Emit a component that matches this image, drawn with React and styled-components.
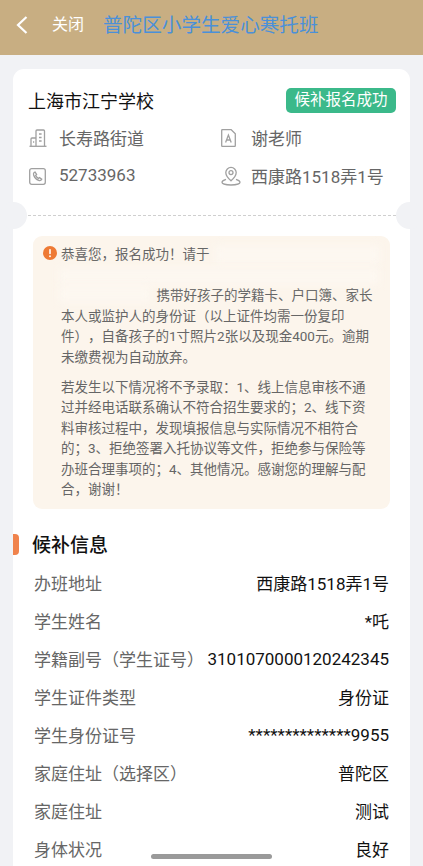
import React from 'react';
import styled, { createGlobalStyle } from 'styled-components';

const GlobalStyle = createGlobalStyle`
  html, body {
    margin: 0;
    padding: 0;
    height: 866px;
    overflow: hidden;
    background: #f1f2f5;
    font-family: Roboto, "Noto Sans CJK SC", sans-serif;
    text-spacing-trim: space-all;
  }
`;

const Page = styled.div`
  position: relative;
  width: 423px;
  height: 866px;
  overflow: hidden;
`;

const Header = styled.header`
  height: 55px;
  background: #c8ae82;
  display: flex;
  align-items: center;
  padding: 0 0 9px 16px;
  box-sizing: border-box;
`;

const BackButton = styled.span`
  display: flex;
  width: 14px;
  margin-right: 22px;
  padding-top: 4px;
`;

const CloseText = styled.span`
  font-size: 16px;
  color: #fff;
  margin-right: 19px;
`;

const HeaderTitle = styled.h1`
  margin: 0;
  font-size: 19.6px;
  font-weight: 400;
  color: #4a90d9;
`;

const Card = styled.main`
  position: relative;
  margin: 14px 13px 0;
  background: #fff;
  border-radius: 11px 11px 0 0;
  padding-top: 19px;
`;

const SchoolRow = styled.div`
  display: flex;
  justify-content: space-between;
  align-items: center;
  padding: 0 14px 0 15px;
  height: 25px;
`;

const SchoolName = styled.h2`
  margin: 0 0 2px;
  font-size: 18px;
  font-weight: 400;
  color: #111;
`;

const Badge = styled.span`
  width: 110px;
  height: 25px;
  line-height: 25px;
  text-align: center;
  border-radius: 5px;
  background: #3bb98a;
  color: #fff;
  font-size: 15.5px;
`;

const InfoGrid = styled.div`
  display: grid;
  grid-template-columns: 192px 1fr;
  grid-auto-rows: 38px;
  padding: 6px 0 0 16px;
  height: 102px;
  box-sizing: border-box;
`;

const InfoItem = styled.div`
  display: flex;
  align-items: center;
  color: #666;
  font-size: 17px;
`;

const InfoIcon = styled.span`
  display: flex;
  width: ${(p) => p.$w}px;
  margin-right: ${(p) => p.$gap}px;
`;

const InfoText = styled.span`
  margin-bottom: 2px;
`;

const Divider = styled.div`
  position: relative;
  height: 0;
  margin: 0 14px 0 15px;
  border-top: 1px dashed #cfcfcf;
`;

const Notch = styled.span`
  position: absolute;
  top: -14px;
  ${(p) => (p.$side === 'left' ? 'left: -28px;' : 'right: -27px;')}
  width: 27px;
  height: 27px;
  border-radius: 50%;
  background: #f1f2f5;
`;

const Notice = styled.section`
  position: relative;
  margin: 20px 20px 0;
  padding: 8px 14px 9px 28px;
  background: #fcf5ec;
  border-radius: 9px;
  font-size: 13.5px;
  line-height: 20.5px;
  color: #666;
`;

const NoticeIcon = styled.span`
  position: absolute;
  left: 10px;
  top: 10px;
  display: flex;
`;

const NoticePara = styled.p`
  margin: 0 0 9.5px;
  &:last-child {
    margin-bottom: 0;
  }
`;

const Indent = styled.span`
  display: inline-block;
  width: 95.5px;
`;

// the blurred-out part of the message
const Smudge = styled.span`
  position: absolute;
  left: ${(p) => p.$left}px;
  top: ${(p) => p.$top}px;
  width: ${(p) => p.$width}px;
  height: ${(p) => p.$height}px;
  background: #fdf8f1;
  filter: blur(4px);
`;

const SectionHead = styled.div`
  display: flex;
  align-items: center;
  margin-top: 25px;
  height: 21px;
`;

const SectionMark = styled.span`
  width: 6px;
  height: 21px;
  border-radius: 0 4px 4px 0;
  background: #f0834c;
  margin-right: 13px;
`;

const SectionTitle = styled.h3`
  margin: 0 0 1px;
  font-size: 19px;
  font-weight: 500;
  color: #111;
`;

const Rows = styled.div`
  margin-top: 9px;
  padding: 0 21px;
`;

const Row = styled.div`
  display: flex;
  justify-content: space-between;
  align-items: center;
  height: 38px;
  font-size: 17px;
`;

const RowLabel = styled.span`
  color: #666;
`;

const RowValue = styled.span`
  color: #111;
`;

const HomeBar = styled.div`
  position: absolute;
  left: 151px;
  bottom: 7px;
  width: 121px;
  height: 5px;
  border-radius: 3px;
  background: #9a9a9a;
`;

const stroke = { fill: 'none', stroke: '#a0a0a0', strokeWidth: 1.3 };

const BuildingIcon = () => (
  <svg width="18" height="18" viewBox="0 0 18 18" {...stroke}>
    <path d="M0.5 17.3H17.5" />
    <path d="M7 17V2a1 1 0 0 1 1-1h6.5a1 1 0 0 1 1 1V17" />
    <path d="M7 9H3a1 1 0 0 0-1 1v7" />
    <path d="M10 5H12.6M10 8.5H12.6M10 12H12.6M4 13H5.2" />
  </svg>
);

const ContactIcon = () => (
  <svg width="15" height="18" viewBox="0 0 15 18" {...stroke}>
    <path d="M0.7 1.5a1 1 0 0 1 1-1H10L14.3 4.8V16.5a1 1 0 0 1-1 1H1.7a1 1 0 0 1-1-1Z" />
    <path d="M4.6 13.5L7.4 6L10.2 13.5M5.6 11H9.2" />
  </svg>
);

const PhoneIcon = () => (
  <svg width="17" height="17" viewBox="0 0 17 17" {...stroke}>
    <rect x="0.7" y="0.7" width="15.6" height="15.6" rx="2" />
    <path d="M5 4.6c-.6.6-.7 1.5-.3 2.6.8 2.2 2.8 4.4 5 5.2 1 .4 1.8.2 2.4-.4l.6-.8-2.2-1.6-1 .8c-1.2-.6-2.2-1.7-2.8-3l.9-.9-1.5-2.4Z" />
  </svg>
);

const PinIcon = () => (
  <svg width="20" height="20" viewBox="0 0 20 20" {...stroke}>
    <path d="M10 14.8C7.2 12.4 4.8 9.8 4.8 6.6a5.2 5.2 0 0 1 10.4 0c0 3.2-2.4 5.8-5.2 8.2Z" />
    <circle cx="10" cy="6.6" r="2" />
    <path d="M5 13.4C2.6 14.2 1 15.2 1 16.3c0 1.5 4 2.7 9 2.7s9-1.2 9-2.7c0-1.1-1.6-2.1-4-2.9" />
  </svg>
);

const AlertIcon = () => (
  <svg width="14" height="14" viewBox="0 0 14 14">
    <circle cx="7" cy="7" r="7" fill="#ee7a35" />
    <rect x="6.2" y="3" width="1.6" height="5.2" rx="0.8" fill="#fff" />
    <circle cx="7" cy="10.2" r="0.95" fill="#fff" />
  </svg>
);

const details = [
  ['办班地址', '西康路1518弄1号'],
  ['学生姓名', '*吒'],
  ['学籍副号（学生证号）', '3101070000120242345'],
  ['学生证件类型', '身份证'],
  ['学生身份证号', '**************9955'],
  ['家庭住址（选择区）', '普陀区'],
  ['家庭住址', '测试'],
  ['身体状况', '良好'],
];

export default function App() {
  return (
    <Page>
      <GlobalStyle />
      <Header>
        <BackButton>
          <svg width="12" height="18" viewBox="0 0 12 18" fill="none" stroke="#fff" strokeWidth="2.2">
            <path d="M10.5 1L2 9L10.5 17" />
          </svg>
        </BackButton>
        <CloseText>关闭</CloseText>
        <HeaderTitle>普陀区小学生爱心寒托班</HeaderTitle>
      </Header>
      <Card>
        <SchoolRow>
          <SchoolName>上海市江宁学校</SchoolName>
          <Badge>候补报名成功</Badge>
        </SchoolRow>
        <InfoGrid>
          <InfoItem>
            <InfoIcon $w={18} $gap={12}><BuildingIcon /></InfoIcon>
            <InfoText>长寿路街道</InfoText>
          </InfoItem>
          <InfoItem>
            <InfoIcon $w={15} $gap={15}><ContactIcon /></InfoIcon>
            <InfoText>谢老师</InfoText>
          </InfoItem>
          <InfoItem>
            <InfoIcon $w={17} $gap={13}><PhoneIcon /></InfoIcon>
            <InfoText>52733963</InfoText>
          </InfoItem>
          <InfoItem>
            <InfoIcon $w={20} $gap={10}><PinIcon /></InfoIcon>
            <InfoText>西康路1518弄1号</InfoText>
          </InfoItem>
        </InfoGrid>
        <Divider>
          <Notch $side="left" />
          <Notch $side="right" />
        </Divider>
        <Notice>
          <NoticeIcon><AlertIcon /></NoticeIcon>
          <Smudge $left={182} $top={10} $width={165} $height={18} />
          <Smudge $left={26} $top={32} $width={320} $height={16} />
          <Smudge $left={26} $top={50} $width={92} $height={16} />
          <NoticePara>
            恭喜您，报名成功！请于
            <br />
            <br />
            <Indent />携带好孩子的学籍卡、户口簿、家长本人或监护人的身份证（以上证件均需一份复印件），自备孩子的1寸照片2张以及现金400元。逾期未缴费视为自动放弃。
          </NoticePara>
          <NoticePara>
            若发生以下情况将不予录取：1、线上信息审核不通过并经电话联系确认不符合招生要求的；2、线下资料审核过程中，发现填报信息与实际情况不相符合的；3、拒绝签署入托协议等文件，拒绝参与保险等办班合理事项的；4、其他情况。感谢您的理解与配合，谢谢！
          </NoticePara>
        </Notice>
        <SectionHead>
          <SectionMark />
          <SectionTitle>候补信息</SectionTitle>
        </SectionHead>
        <Rows>
          {details.map(([label, value]) => (
            <Row key={label}>
              <RowLabel>{label}</RowLabel>
              <RowValue>{value}</RowValue>
            </Row>
          ))}
        </Rows>
      </Card>
      <HomeBar />
    </Page>
  );
}
